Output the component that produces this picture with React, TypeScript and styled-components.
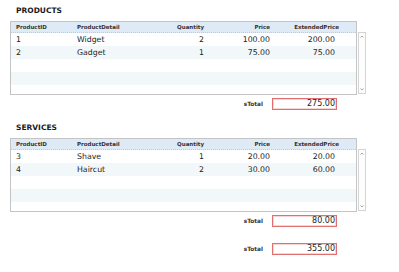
import React from 'react';
import styled, { createGlobalStyle } from 'styled-components';

interface LineItem {
    id: number;
    detail: string;
    quantity: number;
    price: number;
}

const products: LineItem[] = [
    { id: 1, detail: 'Widget', quantity: 2, price: 100 },
    { id: 2, detail: 'Gadget', quantity: 1, price: 75 },
];

const services: LineItem[] = [
    { id: 3, detail: 'Shave', quantity: 1, price: 20 },
    { id: 4, detail: 'Haircut', quantity: 2, price: 30 },
];

const VISIBLE_ROWS = 5;

const sum = (items: LineItem[]) => items.reduce((acc, i) => acc + i.quantity * i.price, 0);

const Section: React.FC<{ title: string; items: LineItem[]; first?: boolean }> = ({ title, items, first }) => {
    const blanks = Math.max(0, VISIBLE_ROWS - items.length);
    return (
        <SectionBlock first={first}>
            <Title>{title}</Title>
            <TableRow>
                <Grid>
                    <HeaderRow>
                        <HeadCell>ProductID</HeadCell>
                        <HeadCell>ProductDetail</HeadCell>
                        <HeadCell right>Quantity</HeadCell>
                        <HeadCell right>Price</HeadCell>
                        <HeadCell right>ExtendedPrice</HeadCell>
                        <HeadCell />
                    </HeaderRow>
                    <Body>
                        {items.map((item, i) => (
                            <DataRow key={item.id} striped={i % 2 === 1}>
                                <Cell>{item.id}</Cell>
                                <Cell>{item.detail}</Cell>
                                <Cell right>{item.quantity}</Cell>
                                <Cell right>{item.price.toFixed(2)}</Cell>
                                <Cell right pad={6}>{(item.quantity * item.price).toFixed(2)}</Cell>
                                <Cell />
                            </DataRow>
                        ))}
                        {Array.from({ length: blanks }).map((_, i) => (
                            <DataRow key={'b' + i} striped={(items.length + i) % 2 === 1} />
                        ))}
                    </Body>
                </Grid>
                <Scrollbar>
                    <Arrow viewBox="0 0 6 7">
                        <path d="M1.5 4.5 L3 3 L4.5 4.5" />
                    </Arrow>
                    <Arrow viewBox="0 0 6 7">
                        <path d="M1.5 2.5 L3 4 L4.5 2.5" />
                    </Arrow>
                </Scrollbar>
            </TableRow>
            <TotalRow>
                <TotalLabel>sTotal</TotalLabel>
                <TotalBox>{sum(items).toFixed(2)}</TotalBox>
            </TotalRow>
        </SectionBlock>
    );
};

const App: React.FC = () => {
    const grand = sum(products) + sum(services);
    return (
        <Page>
            <GlobalStyle />
            <Section title="PRODUCTS" items={products} first />
            <Section title="SERVICES" items={services} />
            <TotalRow gap={16}>
                <TotalLabel>sTotal</TotalLabel>
                <TotalBox>{grand.toFixed(2)}</TotalBox>
            </TotalRow>
        </Page>
    );
};

export default App;

const GlobalStyle = createGlobalStyle`
    html, body {
        margin: 0;
        padding: 0;
        background: #fff;
    }
    body {
        font-family: "DejaVu Sans", "Liberation Sans", sans-serif;
        color: #222;
    }
`;

const Page = styled.div`
    width: 399px;
    height: 272px;
    padding: 5px 0 0 10px;
    box-sizing: border-box;
    overflow: hidden;
`;

const SectionBlock = styled.div<{ first?: boolean }>`
    margin-top: ${props => (props.first ? 0 : 12)}px;
`;

const Title = styled.div`
    height: 12px;
    line-height: 12px;
    font-size: 7.5px;
    font-weight: 700;
    padding-left: 6px;
    margin-bottom: 4px;
    color: #1a1a1a;
`;

const TableRow = styled.div`
    display: flex;
    align-items: flex-start;
`;

const Grid = styled.div`
    width: 347px;
    height: 74px;
    box-sizing: border-box;
    border: 1px solid #c4c4c4;
    background: #fff;
    display: flex;
    flex-direction: column;
`;

const columns = '61px 78px 56px 66px 69px 1fr';

const HeaderRow = styled.div`
    display: grid;
    grid-template-columns: ${columns};
    height: 10px;
    background: #dfeaf7;
    border-bottom: 1px dotted #bccada;
    flex: none;
`;

const HeadCell = styled.div<{ right?: boolean }>`
    font-size: 5.5px;
    font-weight: 700;
    line-height: 10px;
    color: #333;
    text-align: ${props => (props.right ? 'right' : 'left')};
    padding: ${props => (props.right ? '0 2px 0 0' : '0 0 0 5px')};
    white-space: nowrap;
`;

const Body = styled.div`
    flex: 1;
    overflow: hidden;
`;

const DataRow = styled.div<{ striped?: boolean }>`
    display: grid;
    grid-template-columns: ${columns};
    height: 13px;
    background: ${props => (props.striped ? '#f2f8fa' : '#fff')};
`;

const Cell = styled.div<{ right?: boolean; pad?: number }>`
    font-size: 7.8px;
    line-height: 13px;
    color: #222;
    text-align: ${props => (props.right ? 'right' : 'left')};
    padding: ${props => (props.right ? `0 ${props.pad ?? 2}px 0 0` : '0 0 0 5px')};
    white-space: nowrap;
`;

const Scrollbar = styled.div`
    margin: 11px 0 0 1px;
    width: 8px;
    height: 62px;
    box-sizing: border-box;
    border: 1px solid #d4d4d4;
    background: #fdfdfd;
    display: flex;
    flex-direction: column;
    justify-content: space-between;
`;

const Arrow = styled.svg`
    display: block;
    width: 6px;
    height: 7px;
    fill: none;
    stroke: #9a9a9a;
    stroke-width: 0.9;
`;

const TotalRow = styled.div<{ gap?: number }>`
    display: flex;
    align-items: center;
    justify-content: flex-end;
    width: 327px;
    margin-top: ${props => props.gap ?? 3}px;
`;

const TotalLabel = styled.div`
    font-size: 5.8px;
    font-weight: 700;
    color: #333;
    margin-right: 9px;
`;

const TotalBox = styled.div`
    width: 65px;
    height: 12px;
    box-sizing: border-box;
    border: 1px solid #e07070;
    box-shadow: inset 0 0 0 1px #f9d4d4;
    font-size: 8px;
    line-height: 10px;
    text-align: right;
    padding-right: 1px;
    color: #222;
`;
